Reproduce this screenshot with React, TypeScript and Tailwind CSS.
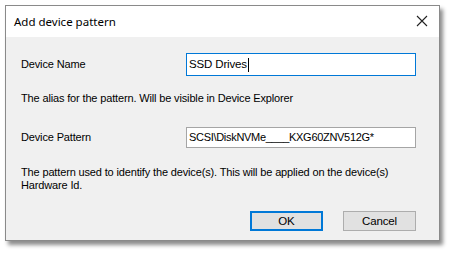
export default function App() {
  return (
    <div className="w-[451px] h-[255px] bg-white pl-[5px] pt-[5px]" style={{ fontFamily: '"Liberation Sans", Arial, sans-serif' }}>
      <div className="w-[435px] h-[236px] border border-[#8a8a8a] bg-[#f0f0f0] flex flex-col shadow-[3px_4px_4px_rgba(0,0,0,0.45)]">
        {/* title bar */}
        <div className="h-[31px] bg-white flex items-center justify-between pl-[8px] pr-[11px] shrink-0">
          <span className="text-[11.5px] text-black" style={{ fontFamily: '"Noto Sans", "Open Sans", sans-serif' }}>
            Add device pattern
          </span>
          <svg width="12" height="12" viewBox="0 0 12 12" className="mb-[2px]">
            <path d="M1 1 L11 11 M11 1 L1 11" stroke="#222" strokeWidth="1.1" fill="none" />
          </svg>
        </div>

        {/* body */}
        <div className="flex flex-col pl-[15px] pr-[23px] pt-[16px] text-[11px] tracking-[-0.15px] text-black leading-[13px]">
          <div className="flex items-center h-[23px]">
            <span className="w-[165px]">Device Name</span>
            <div className="flex-1 h-[23px] bg-white border border-[#0078d7] flex items-center pl-[2px] text-[11.5px]">
              SSD Drives<span className="inline-block w-px h-[14px] bg-black ml-px" />
            </div>
          </div>
          <p className="mt-[16px]">The alias for the pattern. Will be visible in Device Explorer</p>

          <div className="flex items-center h-[21px] mt-[22px]">
            <span className="w-[165px]">Device Pattern</span>
            <div className="flex-1 h-[21px] bg-white border border-[#a5a5a5] flex items-center pl-[2px] text-[11px] tracking-[-0.3px]">
              SCSI\DiskNVMe____KXG60ZNV512G*
            </div>
          </div>
          <p className="mt-[18px]">
            The pattern used to identify the device(s). This will be applied on the device(s)
            <br />
            Hardware Id.
          </p>

          <div className="flex justify-end gap-[20px] mt-[19px]">
            <button className="w-[73px] h-[20px] bg-[#e1e1e1] border-2 border-[#0078d7] text-[11.5px] text-black">OK</button>
            <button className="w-[73px] h-[20px] bg-[#e1e1e1] border border-[#adadad] text-[11.5px] text-black">Cancel</button>
          </div>
        </div>
      </div>
    </div>
  );
}
